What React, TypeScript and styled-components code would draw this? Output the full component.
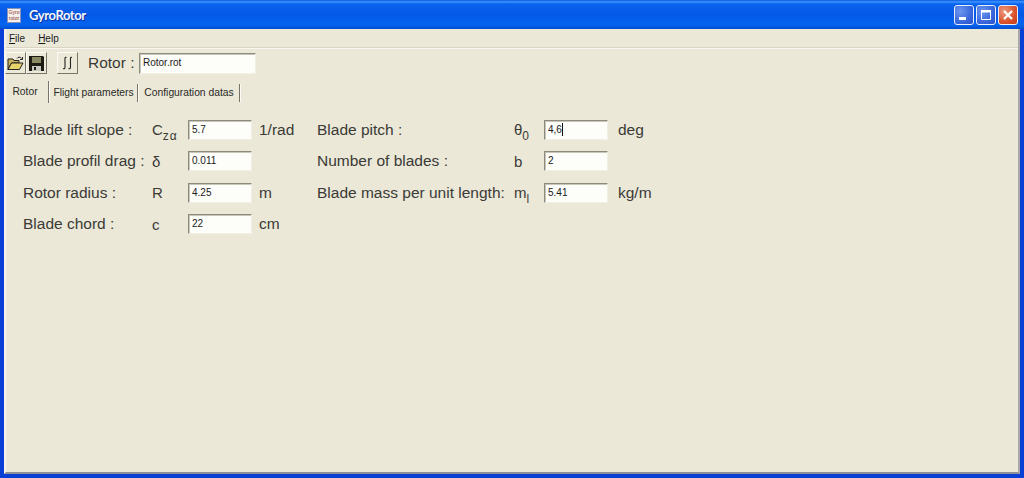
import React from 'react';
import { styled, createGlobalStyle } from 'styled-components';

type Row = {
  label: string;
  symbol: React.ReactNode;
  value: string;
  unit?: string;
  caret?: boolean;
};

const GlobalStyle = createGlobalStyle`
  html, body {
    margin: 0;
    padding: 0;
    background: #0831d9;
  }
  * {
    box-sizing: border-box;
  }
`;

const Window = styled.div`
  width: 1024px;
  height: 478px;
  display: flex;
  flex-direction: column;
  overflow: hidden;
  font-family: 'Liberation Sans', Arial, sans-serif;
  background: #0a3fd6;
  color: #2a2a26;
`;

const TitleBar = styled.div`
  height: 29px;
  flex: none;
  display: flex;
  align-items: center;
  padding: 1px 6px 0 7px;
  background: linear-gradient(180deg, #0a58e0 0%, #3a93ff 6%, #0a63ee 14%, #0459e6 50%, #0464f0 85%, #0450d0 100%);
`;

const AppIcon = styled.div`
  width: 14px;
  height: 15px;
  flex: none;
  background: #f4f1ea;
  border: 1px solid #8a94b8;
  color: #8a2a30;
  font-size: 5px;
  line-height: 6px;
  text-align: center;
  overflow: hidden;
`;

const Title = styled.div`
  margin-left: 8px;
  font-family: 'Lato', sans-serif;
  font-weight: 700;
  font-size: 13px;
  letter-spacing: -0.4px;
  color: #f2f6ff;
  text-shadow: 1px 1px 0 #0a2f9c;
  flex: 1;
`;

const TitleButton = styled.div<{ $close?: boolean }>`
  width: 20px;
  height: 20px;
  margin-left: 2px;
  border: 1px solid #e8eefc;
  border-radius: 3px;
  display: flex;
  align-items: center;
  justify-content: center;
  background: ${p =>
    p.$close
      ? 'radial-gradient(circle at 30% 30%, #ee9a80, #d8532c 60%, #c03c18)'
      : 'radial-gradient(circle at 30% 30%, #6d96ee, #3a68dc 60%, #2a50c8)'};
`;

const Body = styled.div`
  flex: 1;
  display: flex;
  flex-direction: column;
  margin: 0 4px 4px 4px;
  background: #ebe8d8;
  border-left: 2px solid #f6f4ea;
  border-bottom: 2px solid #8e8e98;
  border-right: 2px solid #a8a8a8;
  min-height: 0;
`;

const MenuBar = styled.div`
  height: 19px;
  flex: none;
  display: flex;
  align-items: center;
  gap: 13px;
  padding-left: 3px;
  font-size: 10px;
  color: #1a1a1a;
  border-bottom: 1px solid #d8d5c4;
`;

const MenuItem = styled.span`
  & u {
    text-underline-offset: 1px;
  }
`;

const ToolBar = styled.div`
  height: 31px;
  flex: none;
  display: flex;
  align-items: center;
  padding: 0 0 2px 0;
  margin-left: -1px;
  border-top: 1px solid #f8f6ee;
`;

const ToolButton = styled.div<{ $gap?: number }>`
  width: 21px;
  height: 22px;
  flex: none;
  margin-left: ${p => p.$gap ?? 0}px;
  display: flex;
  align-items: center;
  justify-content: center;
  background: #ece9d9;
  border: 1px solid;
  border-color: #fbfaf4 #77756a #77756a #fbfaf4;
`;

const RotorLabel = styled.span`
  margin-left: 10px;
  font-size: 15.5px;
  color: #3a3a36;
  width: 51px;
  flex: none;
  white-space: nowrap;
`;

const Field = styled.div<{ $width?: number; $height?: number }>`
  width: ${p => p.$width ?? 64}px;
  height: ${p => p.$height ?? 20}px;
  flex: none;
  background: #fdfdf9;
  border: 1px solid;
  border-color: #8d8b7e #f2f0e4 #f2f0e4 #8d8b7e;
  box-shadow: inset 1px 1px 0 #c8c6b8;
  padding-left: 3px;
  font-size: 10px;
  line-height: 17px;
  color: #1a1a1a;
  white-space: nowrap;
`;

const Caret = styled.span`
  display: inline-block;
  width: 1px;
  height: 13px;
  background: #111;
  vertical-align: -3px;
`;

const TabStrip = styled.div`
  height: 22px;
  flex: none;
  display: flex;
  align-items: flex-end;
  margin-top: 2px;
`;

const Tab = styled.div<{ $active?: boolean; $width: number }>`
  width: ${p => p.$width}px;
  height: ${p => (p.$active ? 22 : 18)}px;
  margin-bottom: ${p => (p.$active ? 0 : 1)}px;
  padding-right: ${p => (p.$active ? 4 : 0)}px;
  flex: none;
  text-align: center;
  font-size: 10.3px;
  line-height: ${p => (p.$active ? 21 : 18)}px;
  color: #2a2a26;
  border-right: 1px solid #77756a;
  box-shadow: 1px 0 0 #fbfaf4;
  margin-right: 1px;
  white-space: nowrap;
`;

const Form = styled.div`
  display: grid;
  grid-template-columns: 129px 36px 71px 58px 197px 30px 74px auto;
  grid-auto-rows: 31.5px;
  align-items: center;
  justify-content: start;
  padding: 11px 0 0 17px;
`;

const Label = styled.span`
  font-size: 15.5px;
  white-space: nowrap;
  color: #3a3a36;
`;

const Symbol = styled.span`
  font-size: 15px;
  color: #3a3a36;
  white-space: nowrap;
`;

const Unit = styled.span`
  font-size: 15.5px;
  color: #3a3a36;
  white-space: nowrap;
`;

const Sub = styled.sub`
  font-size: 12px;
  line-height: 0;
  vertical-align: -5px;
  letter-spacing: 1px;
`;

const left: Row[] = [
  { label: 'Blade lift slope :', symbol: <>C<Sub>zα</Sub></>, value: '5.7', unit: '1/rad' },
  { label: 'Blade profil drag :', symbol: 'δ', value: '0.011' },
  { label: 'Rotor radius :', symbol: 'R', value: '4.25', unit: 'm' },
  { label: 'Blade chord :', symbol: 'c', value: '22', unit: 'cm' },
];

const right: Row[] = [
  { label: 'Blade pitch :', symbol: <>θ<Sub>0</Sub></>, value: '4,6', unit: 'deg', caret: true },
  { label: 'Number of blades :', symbol: 'b', value: '2' },
  { label: 'Blade mass per unit length:', symbol: <>m<Sub>l</Sub></>, value: '5.41', unit: 'kg/m' },
];

function Cells({ row }: { row?: Row }) {
  if (!row) {
    return <><span /><span /><span /><span /></>;
  }
  return (
    <>
      <Label>{row.label}</Label>
      <Symbol>{row.symbol}</Symbol>
      <Field>{row.value}{row.caret && <Caret />}</Field>
      <Unit>{row.unit}</Unit>
    </>
  );
}

function OpenIcon() {
  return (
    <svg width="17" height="15" viewBox="0 0 17 15">
      <path d="M1 3h5l1 1.5h5V7H4.5L1 13.5z" fill="#c9b45a" stroke="#222" strokeWidth="1" />
      <path d="M1 13.5L4.5 7H16l-3.5 6.5z" fill="#e8d26a" stroke="#222" strokeWidth="1" />
      <path d="M10 2.5C11 .8 13 .8 14.5 2.2M15.5 1v2.5H13" fill="none" stroke="#222" strokeWidth="1" />
    </svg>
  );
}

function SaveIcon() {
  return (
    <svg width="15" height="15" viewBox="0 0 15 15">
      <path d="M0 0h14l1 1v14H0z" fill="#1c1c14" />
      <rect x="3" y="1" width="9" height="6" fill="#8a8a62" />
      <rect x="3" y="10" width="9" height="5" fill="#c8c8c0" />
      <rect x="5" y="11" width="2" height="3" fill="#1c1c14" />
    </svg>
  );
}

function CurvesIcon() {
  return (
    <svg width="13" height="14" viewBox="0 0 13 14">
      <path d="M5.5 1.5C3.5 .5 4 3 4 7S4.5 13.5 2 12.5" fill="none" stroke="#222" strokeWidth="1.1" />
      <path d="M11 1.5C9 .5 9.5 3 9.5 7S10 13.5 7.5 12.5" fill="none" stroke="#222" strokeWidth="1.1" />
    </svg>
  );
}

function App() {
  return (
    <Window>
      <GlobalStyle />
      <TitleBar>
        <AppIcon>Gyro<br />rotor</AppIcon>
        <Title>GyroRotor</Title>
        <TitleButton>
          <svg width="12" height="12" viewBox="0 0 12 12"><rect x="1" y="8" width="7" height="3" fill="#fff" /></svg>
        </TitleButton>
        <TitleButton>
          <svg width="12" height="12" viewBox="0 0 12 12"><path d="M1.5 2.5h9v8h-9z" fill="none" stroke="#fff" /><rect x="1" y="1" width="10" height="2.5" fill="#fff" /></svg>
        </TitleButton>
        <TitleButton $close>
          <svg width="12" height="12" viewBox="0 0 12 12"><path d="M2 2l8 8M10 2l-8 8" stroke="#fff" strokeWidth="2.2" /></svg>
        </TitleButton>
      </TitleBar>
      <Body>
        <MenuBar>
          <MenuItem><u>F</u>ile</MenuItem>
          <MenuItem><u>H</u>elp</MenuItem>
        </MenuBar>
        <ToolBar>
          <ToolButton><OpenIcon /></ToolButton>
          <ToolButton><SaveIcon /></ToolButton>
          <ToolButton $gap={10}><CurvesIcon /></ToolButton>
          <RotorLabel>Rotor :</RotorLabel>
          <Field $width={117} $height={21}>Rotor.rot</Field>
        </ToolBar>
        <TabStrip>
          <Tab $active $width={43}>Rotor</Tab>
          <Tab $width={88}>Flight parameters</Tab>
          <Tab $width={101}>Configuration datas</Tab>
        </TabStrip>
        <Form>
          {left.map((row, i) => (
            <React.Fragment key={row.label}>
              <Cells row={row} />
              <Cells row={right[i]} />
            </React.Fragment>
          ))}
        </Form>
      </Body>
    </Window>
  );
}

export default App;
